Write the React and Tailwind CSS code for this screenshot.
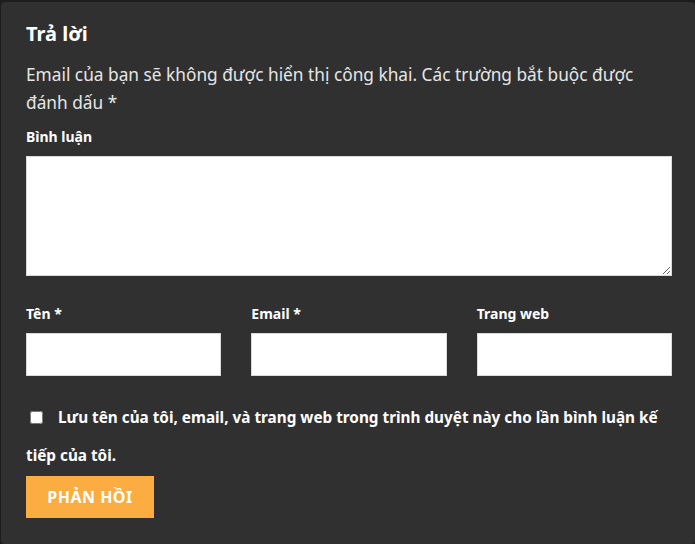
import React from "react";

const FIELDS = [
  { key: "author", label: "Tên", required: true },
  { key: "email", label: "Email", required: true },
  { key: "url", label: "Trang web", required: false },
];

export default function App() {
  return (
    <div
      className="min-h-[544px] bg-[#1c1c1c] pl-px pt-[2px]"
      style={{ fontFamily: "'Noto Sans', sans-serif" }}
    >
      <div className="min-h-[542px] rounded-[4px] bg-[#303030] pl-[25px] pr-[23px] pt-[18px] pb-[24px] text-white">
        <h3 className="text-[20px] font-bold leading-[28px]">Trả lời</h3>
        <p className="mt-[13px] text-[17.3px] leading-[28px] text-[#e6e6e6]">
          Email của bạn sẽ không được hiển thị công khai. Các trường bắt buộc được
          đánh dấu *
        </p>

        <label className="mt-[9px] block text-[14px] font-bold leading-[22px]">
          Bình luận
        </label>
        <textarea className="mt-[8px] block h-[120px] w-full border border-[#d9d9d9] bg-white" />

        <div className="mt-[27px] grid grid-cols-3 gap-[30px]">
          {FIELDS.map((f) => (
            <div key={f.key}>
              <label className="block text-[14px] font-bold leading-[22px]">
                {f.label}
                {f.required && " *"}
              </label>
              <input
                type="text"
                className="mt-[8px] block h-[43px] w-full border border-[#d9d9d9] bg-white"
              />
            </div>
          ))}
        </div>

        <div className="mt-[22px] text-[15.3px] font-bold leading-[38px]">
          <input
            type="checkbox"
            className="ml-[4px] mr-[15px] inline-block h-[13px] w-[13px] align-[-1px]"
          />
          Lưu tên của tôi, email, và trang web trong trình duyệt này cho lần bình luận kế
          tiếp của tôi.
        </div>

        <button
          type="button"
          className="mt-[2px] h-[42px] w-[128px] bg-[#fbad41] text-[16px] font-bold tracking-[0.5px] text-white"
        >
          PHẢN HỒI
        </button>
      </div>
    </div>
  );
}
